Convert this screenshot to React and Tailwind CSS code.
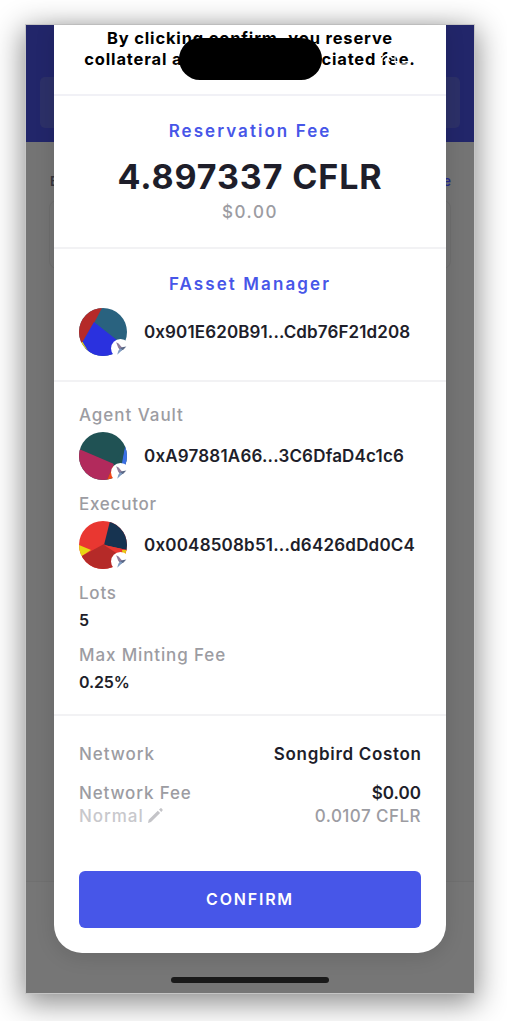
import React from "react";

function Bird() {
  return (
    <span className="absolute left-[32px] top-[31px] flex h-[19px] w-[19px] items-center justify-center rounded-full bg-white">
      <svg width="13" height="13" viewBox="0 0 12 12">
        <path d="M2 .2 4.2 1.4 7.4 5 6.6 7.6 4 5.6Z" fill="#8f7c9c" />
        <path d="M11.4 4.2 9 6.6 6.6 8 4.6 6.4 7.4 4.8Z" fill="#5a6886" />
        <path d="M6 5.8 7.8 7.2 3 11.8 4 8Z" fill="#7f9cc2" />
      </svg>
    </span>
  );
}

function Avatar({ id, children }) {
  return (
    <div className="relative h-12 w-12 shrink-0">
      <svg width="48" height="48" viewBox="0 0 48 48">
        <clipPath id={id}><circle cx="24" cy="24" r="24" /></clipPath>
        <g clipPath={`url(#${id})`}>{children}</g>
      </svg>
      <Bird />
    </div>
  );
}

const address = "ml-[17px] whitespace-nowrap text-[17px] font-semibold leading-5 text-[#1e1e2a]";
const label = "text-[17px] font-medium leading-5 text-[#9c9ca2]";
const heading = "text-center text-[17px] font-semibold leading-5 text-[#4756e8]";

export default function App() {
  return (
    <div className="h-[1021px] w-[507px] overflow-hidden bg-white px-[26px] pt-[25px] font-['Inter',sans-serif]">
      <div className="relative h-[968px] w-[448px] bg-[#747474] shadow-[0_0_0_1px_#c5c5c5,0_7px_28px_3px_rgba(0,0,0,0.46)]">
        <div className="absolute inset-0 flex flex-col overflow-hidden">
          <div className="h-[117px] bg-[#22266a] px-[14px] pt-[52px]">
            <div className="h-[51px] rounded-[5px] bg-[#2c3068]" />
          </div>
          <div className="flex justify-between pl-6 pr-[23px] pt-[31px] text-[13px] font-semibold leading-4">
            <span className="text-[#35353c]">Balance</span>
            <span className="text-[#25298c]">Hide</span>
          </div>
          <div className="mx-[23px] mt-[11px] h-[69px] rounded-lg border border-[#6e6e6e]" />
          <div className="mt-auto h-28 border-t border-[#707070] bg-[#767676]" />
        </div>

        <main className="relative mx-7 flex h-[928px] flex-col rounded-b-[28px] bg-white shadow-[0_4px_20px_rgba(0,0,0,0.12)]">
          <header className="h-[71px] border-b-2 border-[#f1f1f6] pt-[3px] text-center text-[16.5px] font-bold leading-[21px] text-black">
            <p className="tracking-[0.83px]">By clicking confirm, you reserve</p>
            <p className="whitespace-nowrap tracking-[0.83px]">collateral and pay the associated fee.</p>
          </header>

          <section className="h-[153px] border-b-2 border-[#f2f2f4] pt-[25px] text-center">
            <h2 className={`${heading} tracking-[2.05px]`}>Reservation Fee</h2>
            <p className="mt-[16px] text-[34px] font-bold leading-10 tracking-[0.9px] text-[#1e1e2a]">4.897337 CFLR</p>
            <p className={`${label} mt-[5px] tracking-[1.6px]`}>$0.00</p>
          </section>

          <section className="h-[133px] border-b-2 border-[#f2f2f4] px-[25px] pt-[25px]">
            <h2 className={`${heading} tracking-[2.1px]`}>FAsset Manager</h2>
            <div className="mt-[14px] flex items-center">
              <Avatar id="manager">
                <path d="M0 0H48V48H0Z" fill="#29627f" />
                <path d="M0 0H23L15 15 3 35 0 37Z" fill="#b52a28" />
                <path d="M15 14 48 40V48H10L3 35Z" fill="#2a31df" />
                <path d="M0 34 3.6 34 12 48H0Z" fill="#e8d713" />
              </Avatar>
              <span className={`${address} tracking-[0.12px]`}>0x901E620B91...Cdb76F21d208</span>
            </div>
          </section>

          <section className="h-[334px] border-b-2 border-[#f2f2f4] px-[25px] pt-[23px]">
            <h3 className={`${label} tracking-[0.95px]`}>Agent Vault</h3>
            <div className="mt-[7px] flex items-center">
              <Avatar id="vault">
                <path d="M0 0H48V48H0Z" fill="#205254" />
                <path d="M0 17 35 32 28 48H0Z" fill="#b22a5c" />
                <path d="M46 14 48 15V48H40Z" fill="#3b70e6" />
                <path d="M46 14 42 33 34 32Z" fill="#205254" />
                <path d="M34 34 44 38 39 48H28Z" fill="#f14618" />
              </Avatar>
              <span className={`${address} tracking-[0.19px]`}>0xA97881A66...3C6DfaD4c1c6</span>
            </div>
            <h3 className={`${label} mt-[14px] tracking-[0.75px]`}>Executor</h3>
            <div className="mt-[7px] flex items-center">
              <Avatar id="executor">
                <path d="M0 0H48V48H0Z" fill="#e93731" />
                <path d="M31 0 25 24 48 29V0Z" fill="#163350" />
                <path d="M0 24 12 29 3 35H0Z" fill="#e8d713" />
                <path d="M3 35 25 23 44 35V48H3Z" fill="#b52a28" />
                <path d="M25 24 48 29V35H42Z" fill="#e93731" />
                <path d="M43 29H48V35H44Z" fill="#e8c813" />
              </Avatar>
              <span className={`${address} tracking-[0.2px]`}>0x0048508b51...d6426dDd0C4</span>
            </div>
            <h3 className={`${label} mt-[14px] tracking-[0.75px]`}>Lots</h3>
            <p className="mt-[7px] text-[16px] font-semibold leading-5 text-[#1e1e2a]">5</p>
            <h3 className={`${label} mt-[15px] tracking-[0.87px]`}>Max Minting Fee</h3>
            <p className="mt-[7px] text-[16px] font-semibold leading-5 tracking-[-0.15px] text-[#1e1e2a]">0.25%</p>
          </section>

          <section className="flex flex-col px-[25px] pt-[28px]">
            <div className="flex justify-between">
              <span className={`${label} tracking-[0.95px]`}>Network</span>
              <span className="-mr-[0.6px] text-[17px] font-semibold leading-5 tracking-[0.68px] text-[#1e1e2a]">Songbird Coston</span>
            </div>
            <div className="mt-[19px] flex justify-between">
              <span className={`${label} tracking-[0.85px]`}>Network Fee</span>
              <span className="text-[17px] font-semibold leading-5 text-[#1e1e2a]">$0.00</span>
            </div>
            <div className="mt-[3px] flex justify-between">
              <span className="flex items-center text-[17px] font-medium leading-5 tracking-[0.95px] text-[#c8c8cc]">
                Normal
                <svg className="-mt-0.5 ml-[3px]" width="17" height="17" viewBox="0 0 17 17" fill="#c4c4c8">
                  <path d="M1 16 1.7 12.8 10.8 3.7 13.1 6 4 15.1ZM12 2.6 13.2 1.4Q14 .8 14.7 1.5L15.4 2.2Q16 3 15.4 3.7L14.2 4.9Z" />
                </svg>
              </span>
              <span className={`${label} tracking-[0.45px]`}>0.0107 CFLR</span>
            </div>
            <button className="mt-[45px] h-[57px] rounded-md bg-[#4756e8] pb-0.5 text-[16px] font-semibold tracking-[1.8px] text-white">CONFIRM</button>
          </section>
        </main>

        <div className="absolute left-[153px] top-[13px] h-[42px] w-[143px] rounded-full bg-black" />
        <svg className="absolute left-[355px] top-[27px]" width="32" height="16" viewBox="0 0 32 16" fill="none" stroke="#fff" strokeWidth="1.6">
          <path d="M1 6Q6 0 11 6M3 9Q6 5 9 9" />
          <rect x="14" y="3" width="15" height="9" rx="2" strokeWidth="1.2" />
        </svg>
        <div className="absolute left-[145px] top-[952px] h-[6px] w-[158px] rounded-full bg-[#1a1a1a]" />
      </div>
    </div>
  );
}
